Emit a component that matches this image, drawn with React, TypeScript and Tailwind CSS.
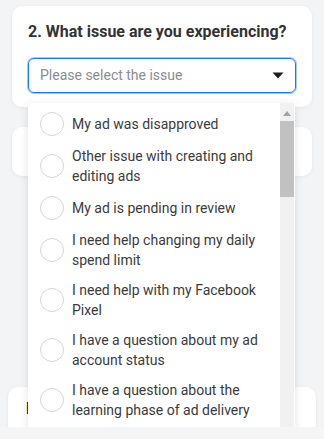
import React from "react";

const options = [
  "My ad was disapproved",
  "Other issue with creating and editing ads",
  "My ad is pending in review",
  "I need help changing my daily spend limit",
  "I need help with my Facebook Pixel",
  "I have a question about my ad account status",
  "I have a question about the learning phase of ad delivery",
];

export default function App() {
  return (
    <div
      className="w-[324px] h-[439px] bg-[#f4f5f7] overflow-hidden"
      style={{ fontFamily: "Roboto, 'Liberation Sans', sans-serif" }}
    >
      <div className="relative h-[427px] overflow-hidden bg-[#f3f4f6]">
        <div className="flex flex-col pt-[6px]">
          <div className="mx-[12px] rounded-[10px] bg-white shadow-[0_1px_4px_rgba(0,0,0,0.06)] px-[16px] pt-[16px] pb-[14px]">
            <div className="text-[16px] leading-[20px] font-bold text-[#333333]">
              2. What issue are you experiencing?
            </div>
            <div className="mt-[16px] h-[35px] rounded-[6px] border border-[#1877f2] ring-1 ring-[#a8c9f5] flex items-center justify-between pl-[11px] pr-[11px]">
              <span className="text-[14px] text-[#8a8d91]">Please select the issue</span>
              <svg width="12" height="7" viewBox="0 0 12 7">
                <path d="M0.5 0.5 L11.5 0.5 L6 6.5 Z" fill="#1c1e21" />
              </svg>
            </div>
          </div>
          <div className="mx-[12px] mt-[20px] h-[49px] rounded-[10px] bg-white shadow-[0_1px_4px_rgba(0,0,0,0.06)]" />
          <div className="mx-[8px] mt-[211px] h-[60px] rounded-[10px] bg-white shadow-[0_1px_4px_rgba(0,0,0,0.06)] px-[18px] pt-[12px]">
            <div className="text-[16px] leading-[20px] font-bold text-[#1c1e21]">D</div>
          </div>
        </div>

        <div className="absolute left-[28px] top-[103px] w-[267px] h-[324px] bg-white shadow-[0_2px_8px_rgba(0,0,0,0.12)] rounded-t-[4px] flex">
          <div className="flex-1 flex flex-col pt-[4px]">
            {options.map((o) => (
              <div key={o} className="flex items-center py-[5px] pl-[12px] pr-[8px] gap-[8px]">
                <div className="w-[24px] h-[24px] shrink-0 rounded-full border border-[#d4d6d9]" />
                <div className="text-[14px] leading-[20px] text-[#3b3b3b]">{o}</div>
              </div>
            ))}
          </div>
          <div className="w-[14px] mr-[1px] bg-[#f1f1f1] flex flex-col items-center">
            <svg width="8" height="5" viewBox="0 0 8 5" className="mt-[8px]">
              <path d="M0 5 L4 0 L8 5 Z" fill="#a3a3a3" />
            </svg>
            <div className="mt-[5px] w-[14px] h-[76px] bg-[#c1c1c1]" />
          </div>
        </div>
      </div>
    </div>
  );
}
